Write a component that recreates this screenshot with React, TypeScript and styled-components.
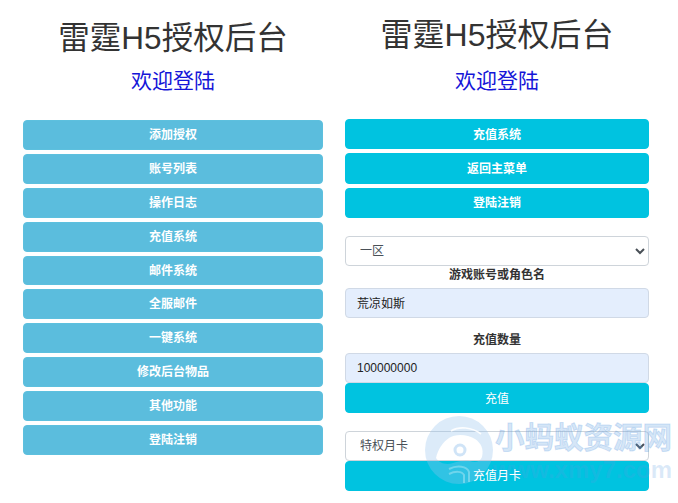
import React from "react";
import styled, { createGlobalStyle } from "styled-components";

const GlobalStyle = createGlobalStyle`
  html, body {
    margin: 0;
    padding: 0;
    background: #fff;
    font-family: "Liberation Sans", "Noto Sans CJK SC", sans-serif;
  }
`;

const Page = styled.div`
  position: relative;
  width: 678px;
  height: 503px;
  overflow: hidden;
  display: flex;
  align-items: flex-start;
  padding-left: 23px;
  box-sizing: border-box;
`;

const Panel = styled.div<{ $width: number; $gap: number; $top: number }>`
  width: ${(p) => p.$width}px;
  margin-right: ${(p) => p.$gap}px;
  padding-top: ${(p) => p.$top}px;
  display: flex;
  flex-direction: column;
`;

const Title = styled.h2<{ $size: number }>`
  margin: 0;
  height: 44px;
  line-height: 44px;
  font-size: ${(p) => p.$size}px;
  font-weight: 400;
  color: #333;
  text-align: center;
  white-space: nowrap;
`;

const Welcome = styled.h3<{ $top: number }>`
  margin: ${(p) => p.$top}px 0 0;
  height: 30px;
  line-height: 30px;
  font-size: 21px;
  font-weight: 400;
  color: #1515d8;
  text-align: center;
`;

const ButtonList = styled.div<{ $top: number }>`
  display: flex;
  flex-direction: column;
  gap: 4px;
  margin-top: ${(p) => p.$top}px;
`;

const ActionButton = styled.button<{ $tone: "info" | "cyan" }>`
  display: block;
  width: 100%;
  box-sizing: border-box;
  height: ${(p) => (p.$tone === "info" ? 29.9 : 30.3)}px;
  padding: 0 0 ${(p) => (p.$tone === "info" ? 3 : 2)}px;
  border: 1px solid ${(p) => (p.$tone === "info" ? "#5dc0de" : "#00c3e0")};
  border-radius: 4px;
  background: ${(p) => (p.$tone === "info" ? "#5bbddd" : "#00c3e0")};
  color: #fff;
  font-family: inherit;
  font-size: 12px;
  font-weight: 700;
  text-align: center;
`;

// sits above the watermark while the button fill stays below it
const ButtonLabel = styled.span`
  position: relative;
  z-index: 2;
  font-weight: 400;
`;

const Select = styled.select<{ $top: number }>`
  display: block;
  width: 100%;
  box-sizing: border-box;
  height: 30px;
  margin-top: ${(p) => p.$top}px;
  padding: 0 4px 0 10px;
  border: 1px solid #ced4da;
  border-radius: 4px;
  background: #fff;
  color: #495057;
  font-family: inherit;
  font-size: 12px;
`;

const FieldLabel = styled.label<{ $top: number }>`
  display: block;
  height: 17px;
  line-height: 19px;
  margin: ${(p) => p.$top}px 0 5px;
  color: #333;
  font-size: 12px;
  font-weight: 700;
  text-align: center;
`;

const TextInput = styled.input`
  display: block;
  width: 100%;
  height: 30px;
  box-sizing: border-box;
  padding: 0 11px;
  border: 1px solid #d0d9e6;
  border-radius: 4px;
  background: #e4eefd;
  color: #222;
  font-family: inherit;
  font-size: 12px;
`;

const Watermark = styled.div`
  position: absolute;
  left: 425px;
  top: 416px;
  width: 253px;
  height: 82px;
  z-index: 1;
  pointer-events: none;
`;

const MarkLogo = styled.svg`
  position: absolute;
  left: 0;
  top: 0;
`;

const MarkName = styled.div`
  position: absolute;
  left: 70px;
  top: 3px;
  font-size: 29.5px;
  line-height: 38px;
  font-weight: 700;
  color: rgba(90, 155, 224, 0.26);
  -webkit-text-stroke: 1px rgba(90, 155, 224, 0.26);
  white-space: nowrap;
`;

const MarkUrl = styled.div`
  position: absolute;
  right: 6px;
  top: 40px;
  font-size: 24px;
  line-height: 28px;
  font-weight: 700;
  color: rgba(90, 155, 224, 0.22);
  white-space: nowrap;
`;

const menu = ["添加授权", "账号列表", "操作日志", "充值系统", "邮件系统", "全服邮件", "一键系统", "修改后台物品", "其他功能", "登陆注销"];
const actions = ["充值系统", "返回主菜单", "登陆注销"];

export default function App() {
  return (
    <Page>
      <GlobalStyle />
      <Panel $width={300} $gap={22} $top={16}>
        <Title $size={31.5}>雷霆H5授权后台</Title>
        <Welcome $top={6}>欢迎登陆</Welcome>
        <ButtonList $top={24}>
          {menu.map((m) => (
            <ActionButton key={m} $tone="info">{m}</ActionButton>
          ))}
        </ButtonList>
      </Panel>
      <Panel $width={304} $gap={0} $top={13}>
        <Title $size={32}>雷霆H5授权后台</Title>
        <Welcome $top={9}>欢迎登陆</Welcome>
        <ButtonList $top={23}>
          {actions.map((a) => (
            <ActionButton key={a} $tone="cyan">{a}</ActionButton>
          ))}
        </ButtonList>
        <Select $top={18} defaultValue="一区">
          <option>一区</option>
          <option>二区</option>
        </Select>
        <FieldLabel $top={0}>游戏账号或角色名</FieldLabel>
        <TextInput defaultValue="荒凉如斯" />
        <FieldLabel $top={13}>充值数量</FieldLabel>
        <TextInput defaultValue="100000000" />
        <ActionButton $tone="cyan"><ButtonLabel>充值</ButtonLabel></ActionButton>
        <Select $top={17.4} defaultValue="特权月卡">
          <option>特权月卡</option>
          <option>至尊月卡</option>
        </Select>
        <ActionButton $tone="cyan"><ButtonLabel>充值月卡</ButtonLabel></ActionButton>
      </Panel>
      <Watermark>
        <MarkLogo width="70" height="70" viewBox="0 0 70 70">
          <path
            fillRule="evenodd"
            fill="rgba(150, 195, 238, 0.33)"
            d="M34 0a34 34 0 1 1 0 68a34 34 0 0 1 0-68zM11 42C13 33 18 26 24 22C30 18 42 18 50 23C56 27 59 33 57 41C55 46 50 47 45 45C40 44 34 45 28 47C22 49 15 48 11 42z"
          />
          <circle cx="35" cy="34" r="5" fill="none" stroke="rgba(150, 195, 238, 0.45)" strokeWidth="3" />
          <path d="M26 15C34 10 47 11 56 18" fill="none" stroke="#fff" strokeOpacity="0.9" strokeWidth="1.6" />
          <path d="M24 53C32 49 42 50 44 56L44 66M24 58C30 55 37 55 39 59L39 67" fill="none" stroke="#fff" strokeOpacity="0.3" strokeWidth="2" />
        </MarkLogo>
        <MarkName>小蚂蚁资源网</MarkName>
        <MarkUrl>www.xmy7.com</MarkUrl>
      </Watermark>
    </Page>
  );
}
